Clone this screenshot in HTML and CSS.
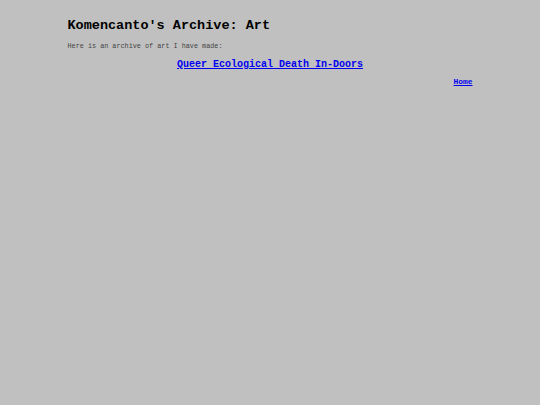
FILE: index.html
```html
<!DOCTYPE html>
<html>
<head>
<meta charset="utf-8">
<link rel="stylesheet" href="styles.css">
</head>
<body>
<div class="page">
<h1 class="title">Komencanto's Archive: Art</h1>
<p class="intro">Here is an archive of art I have made:</p>
<p class="entry"><a href="#">Queer Ecological Death In-Doors</a></p>
<p class="home"><a href="#">Home</a></p>
</div>
</body>
</html>
```
FILE: styles.css
```css
html, body {
  margin: 0;
  padding: 0;
  background: #c0c0c0;
  font-family: "Liberation Mono", "Courier New", monospace;
  color: #000;
}
.page {
  width: 405px;
  margin: 0 auto;
  padding-top: 17px;
}
.title {
  font-size: 13.5px;
  font-weight: bold;
  margin: 0;
  line-height: 17px;
}
.intro {
  font-size: 6.8px;
  margin: 8px 0 0 0;
  line-height: 9px;
  color: #444;
}
.entry {
  font-size: 10px;
  font-weight: bold;
  text-align: center;
  margin: 7px 0 0 0;
  line-height: 13px;
}
.entry a, .home a {
  color: #0000ee;
}
.home {
  font-size: 7.9px;
  font-weight: bold;
  text-align: right;
  margin: 6px 0 0 0;
  line-height: 10px;
}
```
